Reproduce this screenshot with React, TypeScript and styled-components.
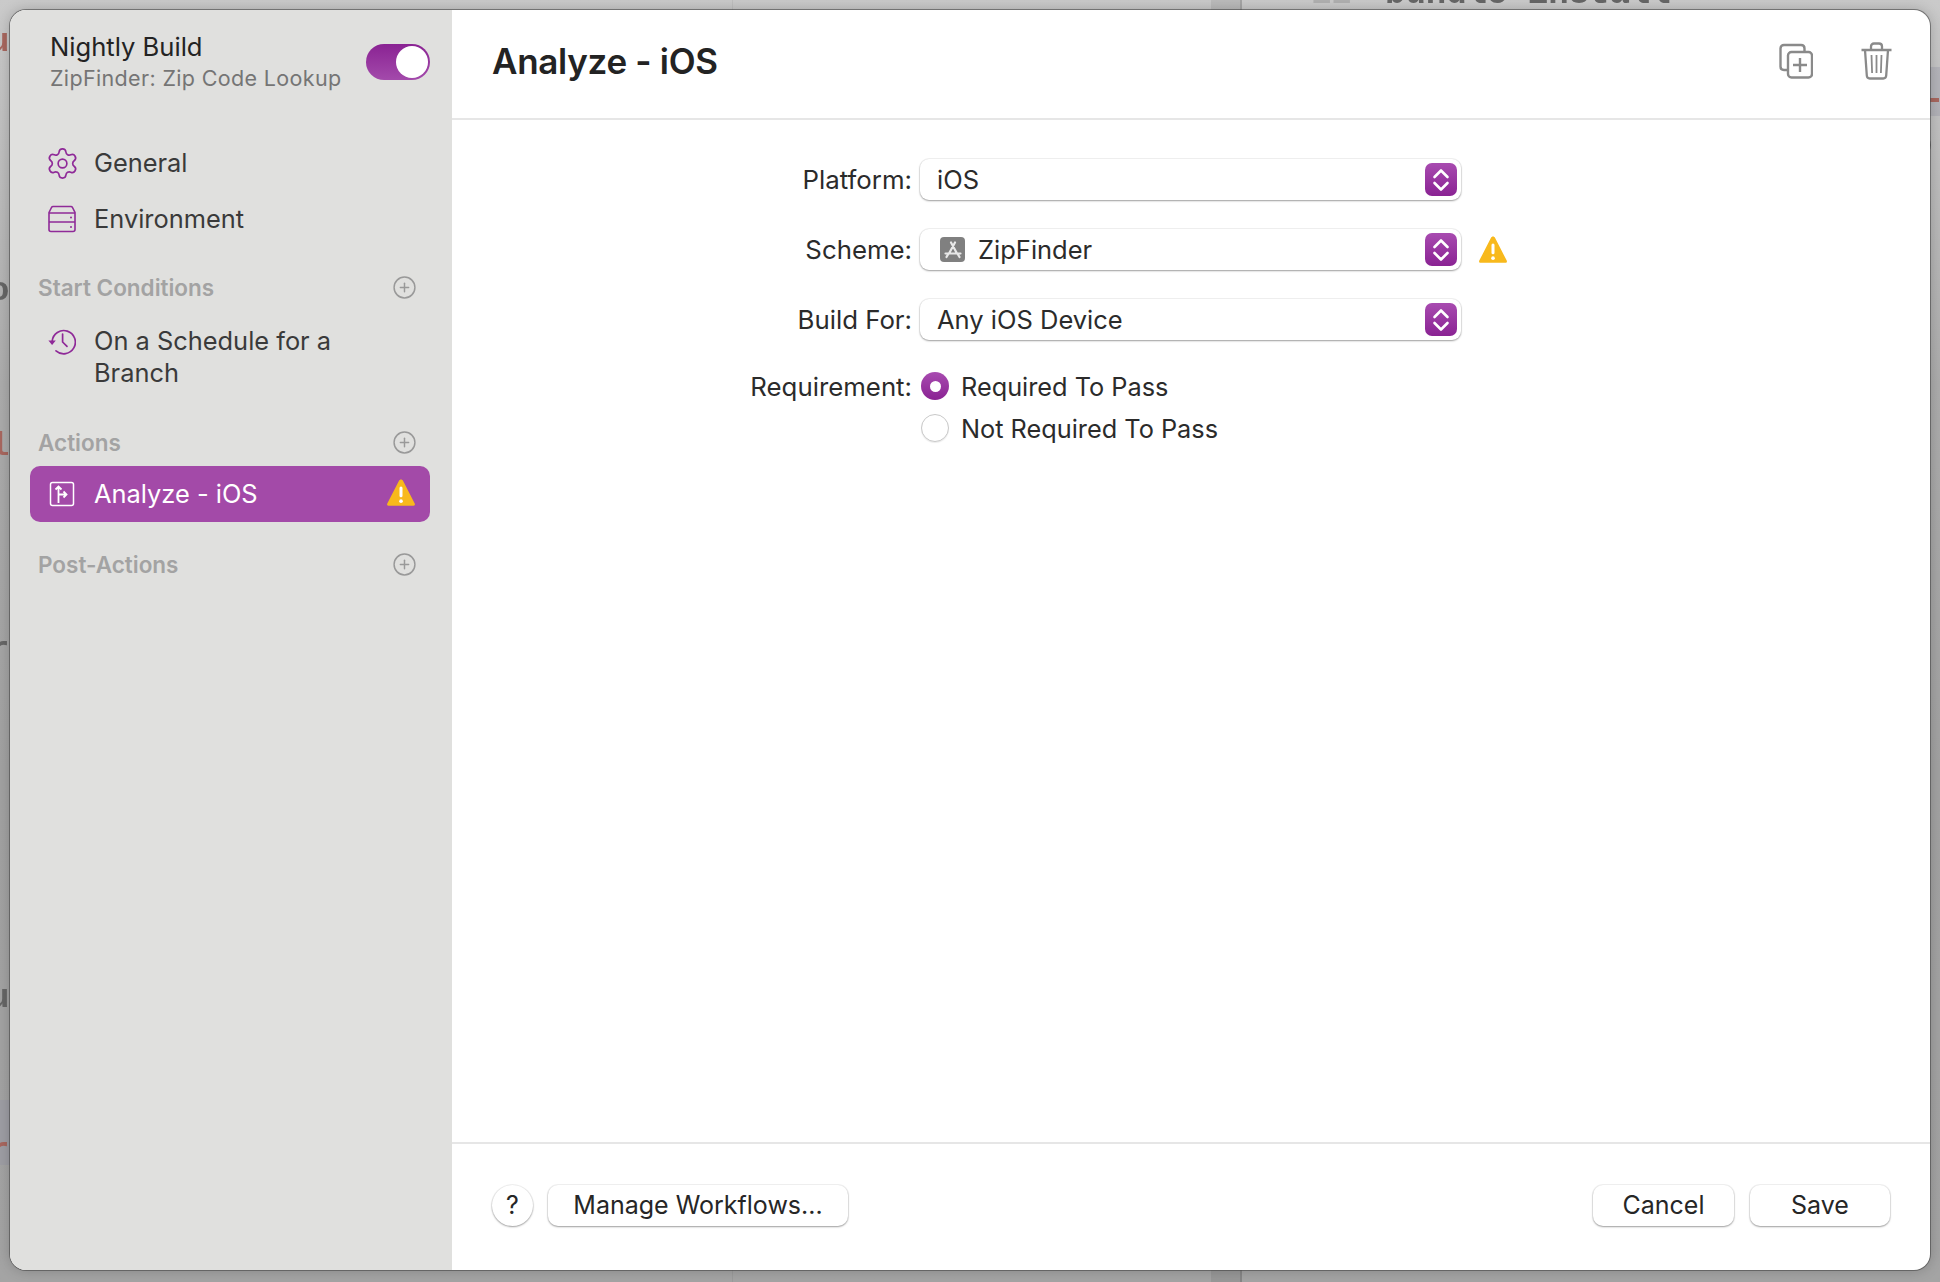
import React from "react";
import styled, { createGlobalStyle } from "styled-components";
import { CirclePlus, Settings } from "lucide-react";

const PURPLE = "#8f2a98";

const GlobalStyle = createGlobalStyle`
  html, body {
    margin: 0;
    padding: 0;
  }
  body {
    font-family: Inter, "Liberation Sans", sans-serif;
    color: #262626;
    -webkit-font-smoothing: antialiased;
  }
`;

const Backdrop = styled.div`
  position: relative;
  width: 1940px;
  height: 1282px;
  box-sizing: border-box;
  padding: 10px 10px 12px 10px;
  overflow: hidden;
  background: linear-gradient(180deg, #cacaca 0%, #acacac 30%, #a2a2a2 60%, #a4a4a4 100%);
`;

// the editor that sits dimmed behind the sheet
const BackdropCode = styled.span<{ $x: number; $y: number; $red?: boolean; $faint?: boolean }>`
  position: absolute;
  left: ${(p) => p.$x}px;
  top: ${(p) => p.$y}px;
  font-family: "Liberation Mono", monospace;
  font-size: 34px;
  line-height: 36px;
  font-weight: 700;
  filter: blur(0.5px);
  color: ${(p) => (p.$red ? "#a8675f" : p.$faint ? "#b0b0b0" : "#666")};
`;

const BackdropLine = styled.div<{ $x: number; $w: number; $color: string }>`
  position: absolute;
  left: ${(p) => p.$x}px;
  top: 0;
  bottom: 0;
  width: ${(p) => p.$w}px;
  background: ${(p) => p.$color};
`;

const BackdropBand = styled.div<{ $y: number; $h: number; $left: number; $w: number }>`
  position: absolute;
  left: ${(p) => p.$left}px;
  top: ${(p) => p.$y}px;
  width: ${(p) => p.$w}px;
  height: ${(p) => p.$h}px;
  background: rgba(150, 150, 165, 0.35);
`;

const Window = styled.div`
  position: relative;
  display: flex;
  width: 100%;
  height: 100%;
  border-radius: 16px;
  overflow: hidden;
  background: #fff;
  box-shadow: 0 0 0 1px rgba(70, 70, 70, 0.6), 0 0 14px rgba(0, 0, 0, 0.22);
`;

const Sidebar = styled.aside`
  width: 442px;
  flex: none;
  box-sizing: border-box;
  padding: 0 22px 0 20px;
  background: #e0e0de;
  display: flex;
  flex-direction: column;
`;

const SidebarHead = styled.div`
  display: flex;
  align-items: flex-start;
  justify-content: space-between;
  padding: 21px 0 0 20px;
  height: 125px;
  box-sizing: border-box;
`;

const Titles = styled.div`
  display: flex;
  flex-direction: column;
`;

const WorkflowName = styled.div`
  font-size: 25.6px;
  line-height: 32px;
  color: #232323;
`;

const ProductName = styled.div`
  font-size: 21.5px;
  line-height: 31px;
  letter-spacing: 0.35px;
  color: #757575;
`;

const Toggle = styled.div`
  position: relative;
  width: 64px;
  height: 36px;
  margin-top: 13px;
  border-radius: 18px;
  background: linear-gradient(180deg, #8a2393, #a34aab);
`;

const ToggleKnob = styled.span`
  position: absolute;
  right: 2px;
  top: 2px;
  width: 32px;
  height: 32px;
  border-radius: 50%;
  background: #fff;
`;

const NavItem = styled.div<{ $selected?: boolean; $tall?: boolean }>`
  display: flex;
  align-items: flex-start;
  gap: 18px;
  box-sizing: border-box;
  height: ${(p) => (p.$tall ? 95 : 56)}px;
  padding: ${(p) => (p.$tall ? "15px" : "12px")} 14px 0 18px;
  border-radius: 10px;
  font-size: 25.4px;
  line-height: 32px;
  color: ${(p) => (p.$selected ? "#fff" : "#3a3a3a")};
  background: ${(p) => (p.$selected ? "#a34aa8" : "transparent")};
`;

const NavIcon = styled.span<{ $color?: string }>`
  flex: none;
  display: flex;
  align-items: center;
  justify-content: center;
  width: 28px;
  height: 28px;
  margin-top: 2px;
  color: ${(p) => p.$color ?? PURPLE};

  svg {
    flex: none;
  }
`;

const NavLabel = styled.span`
  flex: 1;
`;

const SectionHead = styled.div<{ $top: number; $bottom?: number }>`
  display: flex;
  align-items: center;
  justify-content: space-between;
  height: 28px;
  margin-top: ${(p) => p.$top}px;
  margin-bottom: ${(p) => p.$bottom ?? 9}px;
  padding: 0 13px 0 8px;
  font-size: 22.5px;
  font-weight: 600;
  color: #a3a3a3;
`;

const Main = styled.main`
  flex: 1;
  display: flex;
  flex-direction: column;
  min-width: 0;
`;

const Header = styled.header`
  display: flex;
  align-items: center;
  justify-content: space-between;
  height: 110px;
  flex: none;
  box-sizing: border-box;
  padding: 0 36px 6px 40px;
  border-bottom: 2px solid #e6e6e6;
`;

const Title = styled.h1`
  margin: 0;
  font-size: 35px;
  font-weight: 600;
  letter-spacing: -0.3px;
  color: #232323;
`;

const HeaderActions = styled.div`
  display: flex;
  gap: 44px;
  color: #8a8a8a;
`;

const IconSlot = styled.span`
  display: flex;
  width: 36px;
  height: 38px;
  align-items: center;
  justify-content: center;
`;

const Form = styled.section`
  flex: 1;
  padding: 39px 0 0 0;
  display: grid;
  grid-template-columns: 460px 541px auto;
  grid-auto-rows: min-content;
  column-gap: 8px;
  align-content: start;
`;

const Label = styled.div<{ $top?: number }>`
  font-size: 25.8px;
  line-height: 42px;
  text-align: right;
  color: #2b2b2b;
  margin-top: ${(p) => p.$top ?? 0}px;
`;

const Select = styled.div`
  display: flex;
  align-items: center;
  box-sizing: border-box;
  height: 41px;
  padding: 0 4px 0 17px;
  border-radius: 9px;
  background: #fff;
  box-shadow: 0 0 0 1px rgba(0, 0, 0, 0.05), 0 1px 2px rgba(0, 0, 0, 0.35);
  font-size: 25.5px;
  color: #2b2b2b;
  margin-bottom: 29px;
`;

const SelectText = styled.span`
  flex: 1;
`;

const Stepper = styled.span`
  width: 32px;
  height: 33px;
  border-radius: 7px;
  background: linear-gradient(180deg, #a84bb0, #8a2393);
  display: flex;
  align-items: center;
  justify-content: center;
`;

const AppGlyph = styled.span`
  width: 25px;
  height: 25px;
  margin: 0 13px 0 3px;
  border-radius: 4px;
  background: #808080;
  display: flex;
  align-items: center;
  justify-content: center;
`;

const WarnSlot = styled.span`
  display: flex;
  align-items: center;
  height: 41px;
  margin-left: 9px;
`;

const RadioGroup = styled.div`
  grid-column: 2 / 4;
  display: flex;
  flex-direction: column;
  margin-top: -4px;
  padding-left: 1px;
`;

const RadioRow = styled.div`
  display: flex;
  align-items: center;
  gap: 12px;
  height: 42px;
  font-size: 25.3px;
  color: #2b2b2b;
`;

const Radio = styled.span<{ $on?: boolean }>`
  display: flex;
  align-items: center;
  justify-content: center;
  width: 28px;
  height: 28px;
  box-sizing: border-box;
  border-radius: 50%;
  ${(p) =>
    p.$on
      ? "background: linear-gradient(180deg, #a84bb0, #8a2393);"
      : "border: 1px solid #c9c9c9; background: #fff; box-shadow: 0 1px 1px rgba(0,0,0,0.08);"}
`;

const RadioDot = styled.span`
  width: 11px;
  height: 11px;
  border-radius: 50%;
  background: #fff;
`;

const Footer = styled.footer`
  flex: none;
  height: 128px;
  box-sizing: border-box;
  border-top: 2px solid #e6e6e6;
  padding: 41px 40px 0 40px;
  display: flex;
  align-items: flex-start;
  gap: 15px;
`;

const Button = styled.button<{ $width: number; $round?: boolean }>`
  width: ${(p) => p.$width}px;
  height: 41px;
  padding: 0 0 2px 0;
  border: 0;
  border-radius: ${(p) => (p.$round ? "50%" : "10px")};
  background: #fff;
  box-shadow: 0 0 0 1px rgba(0, 0, 0, 0.05), 0 1px 2px rgba(0, 0, 0, 0.35);
  font-family: inherit;
  font-size: 25px;
  color: #262626;
`;

const Spacer = styled.div`
  flex: 1;
`;

const EndButtons = styled.div`
  display: flex;
  gap: 16px;
`;

const Warning = ({ size = 28 }: { size?: number }) => (
  <svg width={size} height={size} viewBox="0 0 28 28">
    <path
      d="M14 1.5c.9 0 1.5.5 2 1.4l10.8 21c.5 1 .1 2.1-1.2 2.1H2.4c-1.3 0-1.7-1.1-1.2-2.1L12 2.9c.5-.9 1.1-1.4 2-1.4z"
      fill="#f8b91c"
    />
    <rect x="12.6" y="8" width="2.8" height="10" rx="1.4" fill="#fff" />
    <circle cx="14" cy="21.6" r="1.7" fill="#fff" />
  </svg>
);

const DrawerIcon = () => (
  <svg width="28" height="28" viewBox="0 0 28 28" fill="none" stroke="currentColor" strokeWidth="1.6">
    <path d="M1 7.5 3.5 2.5c.3-.6.8-1 1.6-1h17.8c.8 0 1.3.4 1.6 1L27 7.5v17c0 1.2-.8 2-2 2H3c-1.2 0-2-.8-2-2z" />
    <path d="M1 8h26M1 17h26" />
    <circle cx="23" cy="12.5" r="1" fill="currentColor" stroke="none" />
    <circle cx="23" cy="22" r="1" fill="currentColor" stroke="none" />
  </svg>
);

const ScheduleIcon = () => (
  <svg width="28" height="28" viewBox="0 0 28 28" fill="none" stroke="currentColor" strokeWidth="1.7">
    <path d="M4.2 14A11.6 11.6 0 1 1 8 23.8" strokeLinecap="round" />
    <path d="M14.6 7v8l4.4 4.4" strokeLinecap="round" />
    <path d="M0.4 13.4h7.4L4.1 18z" fill="currentColor" stroke="none" />
  </svg>
);

const AnalyzeIcon = () => (
  <svg width="28" height="28" viewBox="0 0 28 28" fill="none" stroke="currentColor" strokeWidth="1.5">
    <rect x="2.5" y="2.5" width="23" height="23" rx="2" />
    <path d="M10.5 23V6.5M7.5 9.5l3-3 3 3M10.5 14.5h7.5M15.5 11.5l3 3-3 3" strokeWidth="1.8" />
  </svg>
);

const DuplicateIcon = () => (
  <svg width="34" height="36" viewBox="0 0 34 36" fill="none" stroke="currentColor" strokeWidth="2.4">
    <path d="M9 27H5c-2 0-3.5-1.4-3.5-3.4V5.4C1.5 3.4 3 2 5 2h17c2 0 3.5 1.4 3.5 3.4V9" />
    <rect x="9" y="9" width="24" height="25.5" rx="3.5" />
    <path d="M21 15v14M14 22h14" />
  </svg>
);

const TrashIcon = () => (
  <svg width="31" height="38" viewBox="0 0 31 38" fill="none" stroke="currentColor" strokeWidth="2.3">
    <path d="M0.5 8h30" />
    <path d="M10 8V4.5C10 2.5 11.2 1.5 13 1.5h5c1.8 0 3 1 3 3V8" />
    <path d="M4 8l1.8 25.5c.1 1.8 1.2 3 3 3h13.4c1.8 0 2.9-1.2 3-3L27 8" />
    <path d="M10.5 13l.6 18M15.5 13v18M20.5 13l-.6 18" strokeWidth="1.8" />
  </svg>
);

const AppStoreGlyph = () => (
  <svg width="20" height="20" viewBox="0 0 20 20" fill="none" stroke="#e8e8e8" strokeWidth="2.2" strokeLinecap="round">
    <path d="M8 2.500l6 11M12 2.500l-6 11M2.500 13.500h15M3.500 17l1.500-2.500M16.500 17L15 14.500" />
  </svg>
);

const SelectArrows = () => (
  <Stepper>
    <svg width="18" height="24" viewBox="0 0 18 24" fill="none" stroke="#fff" strokeWidth="2.6" strokeLinecap="round" strokeLinejoin="round">
      <path d="M2.5 9 9 2.5 15.5 9M2.5 15 9 21.5 15.5 15" />
    </svg>
  </Stepper>
);

const AddButton = () => <CirclePlus size={25} strokeWidth={1.4} color="#999" />;

export default function App() {
  return (
    <Backdrop>
      <GlobalStyle />
      <BackdropLine $x={732} $w={1} $color="rgba(0,0,0,0.05)" />
      <BackdropLine $x={1211} $w={29} $color="rgba(0,0,0,0.07)" />
      <BackdropLine $x={1240} $w={2} $color="rgba(0,0,0,0.18)" />
      <BackdropBand $y={67} $h={49} $left={1930} $w={10} />
      <BackdropBand $y={1100} $h={65} $left={0} $w={10} />
      <BackdropCode $x={-11} $y={24} $red>u</BackdropCode>
      <BackdropCode $x={-11} $y={273}>o</BackdropCode>
      <BackdropCode $x={-11} $y={428} $red>l</BackdropCode>
      <BackdropCode $x={-11} $y={632}>r</BackdropCode>
      <BackdropCode $x={-11} $y={980}>u</BackdropCode>
      <BackdropCode $x={-11} $y={1133} $red>r</BackdropCode>
      <BackdropCode $x={1924} $y={82} $red>-</BackdropCode>
      <BackdropCode $x={1912} $y={127}>o</BackdropCode>
      <BackdropCode $x={1311} $y={-24} $faint>12</BackdropCode>
      <BackdropCode $x={1385} $y={-24}>bundle install</BackdropCode>
      <Window>
        <Sidebar>
          <SidebarHead>
            <Titles>
              <WorkflowName>Nightly Build</WorkflowName>
              <ProductName>ZipFinder: Zip Code Lookup</ProductName>
            </Titles>
            <Toggle>
              <ToggleKnob />
            </Toggle>
          </SidebarHead>
          <NavItem>
            <NavIcon><Settings size={35} strokeWidth={1.15} /></NavIcon>
            <NavLabel>General</NavLabel>
          </NavItem>
          <NavItem>
            <NavIcon><DrawerIcon /></NavIcon>
            <NavLabel>Environment</NavLabel>
          </NavItem>
          <SectionHead $top={26}>
            Start Conditions
            <AddButton />
          </SectionHead>
          <NavItem $tall>
            <NavIcon><ScheduleIcon /></NavIcon>
            <NavLabel>On a Schedule for a Branch</NavLabel>
          </NavItem>
          <SectionHead $top={23} $bottom={10}>
            Actions
            <AddButton />
          </SectionHead>
          <NavItem $selected>
            <NavIcon $color="#fff"><AnalyzeIcon /></NavIcon>
            <NavLabel>Analyze - iOS</NavLabel>
            <Warning size={30} />
          </NavItem>
          <SectionHead $top={28}>
            Post-Actions
            <AddButton />
          </SectionHead>
        </Sidebar>
        <Main>
          <Header>
            <Title>Analyze - iOS</Title>
            <HeaderActions>
              <IconSlot><DuplicateIcon /></IconSlot>
              <IconSlot><TrashIcon /></IconSlot>
            </HeaderActions>
          </Header>
          <Form>
            <Label>Platform:</Label>
            <Select>
              <SelectText>iOS</SelectText>
              <SelectArrows />
            </Select>
            <div />
            <Label>Scheme:</Label>
            <Select>
              <AppGlyph><AppStoreGlyph /></AppGlyph>
              <SelectText>ZipFinder</SelectText>
              <SelectArrows />
            </Select>
            <WarnSlot><Warning size={30} /></WarnSlot>
            <Label>Build For:</Label>
            <Select>
              <SelectText>Any iOS Device</SelectText>
              <SelectArrows />
            </Select>
            <div />
            <Label $top={-3}>Requirement:</Label>
            <RadioGroup>
              <RadioRow><Radio $on><RadioDot /></Radio>Required To Pass</RadioRow>
              <RadioRow><Radio />Not Required To Pass</RadioRow>
            </RadioGroup>
          </Form>
          <Footer>
            <Button $width={41} $round>?</Button>
            <Button $width={300}>Manage Workflows...</Button>
            <Spacer />
            <EndButtons>
              <Button $width={141}>Cancel</Button>
              <Button $width={140}>Save</Button>
            </EndButtons>
          </Footer>
        </Main>
      </Window>
    </Backdrop>
  );
}
